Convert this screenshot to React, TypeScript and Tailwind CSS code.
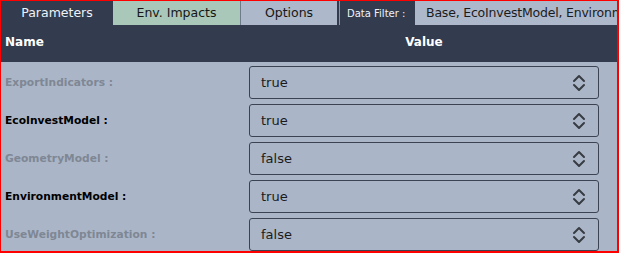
import React from "react";

const rows = [
  { name: "ExportIndicators :", value: "true", active: false },
  { name: "EcoInvestModel :", value: "true", active: true },
  { name: "GeometryModel :", value: "false", active: false },
  { name: "EnvironmentModel :", value: "true", active: true },
  { name: "UseWeightOptimization :", value: "false", active: false },
];

function UpDown() {
  return (
    <svg width="14" height="20" viewBox="0 0 14 20" fill="none" stroke="#373b42" strokeWidth="2" strokeLinecap="round" strokeLinejoin="round">
      <path d="M2 8 L7 3 L12 8" />
      <path d="M2 12 L7 17 L12 12" />
    </svg>
  );
}

export default function App() {
  return (
    <div
      className="w-[619px] h-[253px] overflow-hidden border-t border-l border-r-2 border-b-2 border-[#ff0000] bg-[#aab6c8] flex flex-col"
      style={{ fontFamily: "Tahoma, 'DejaVu Sans', sans-serif" }}
    >
      {/* Tabs + filter */}
      <div className="h-6 flex bg-[#323c4e] shrink-0">
        <div className="w-[112px] flex items-center justify-center text-[12.5px] text-[#eef2f7]">Parameters</div>
        <div className="w-[128px] flex items-center justify-center text-[12.5px] text-[#161616] bg-[#a9c8b9] border-r border-[#6f7a8a]">
          Env. Impacts
        </div>
        <div className="w-[96px] flex items-center justify-center text-[12.5px] text-[#161616] bg-[#adb8ca]">Options</div>
        <div className="w-[2px]" />
        <div className="w-px bg-[#8c96a6]" />
        <div className="w-[75px] flex items-center pl-[7px] text-[10px] text-[#eef2f7]">Data Filter :</div>
        <div className="flex-1 min-w-0 flex items-center bg-[#adb8ca] pl-[11px] text-[12.5px] tracking-[-0.2px] text-[#1b1b1b] whitespace-nowrap overflow-hidden">
          Base, EcoInvestModel, EnvironmentModel
        </div>
      </div>

      {/* Header */}
      <div className="h-[37px] flex bg-[#323c4e] text-white font-bold text-[12px] shrink-0 pt-[8px]">
        <div className="w-[248px] pl-[4px]">Name</div>
        <div className="w-[350px] text-center">Value</div>
      </div>

      {/* Rows */}
      <div className="flex flex-col gap-[5px] pt-1">
        {rows.map((r) => (
          <div key={r.name} className="h-[33px] flex items-center shrink-0">
            <div
              className={`w-[248px] pl-[4px] pt-[2px] font-bold text-[10.7px] ${r.active ? "text-black" : "text-[#7f8794]"}`}
            >
              {r.name}
            </div>
            <div className="w-[350px] h-full flex items-center justify-between border border-[#3b4352] rounded-[3px] pl-[11px] pr-[12px] text-[13px] text-[#1b1b1b]">
              <span>{r.value}</span>
              <UpDown />
            </div>
          </div>
        ))}
      </div>
    </div>
  );
}
